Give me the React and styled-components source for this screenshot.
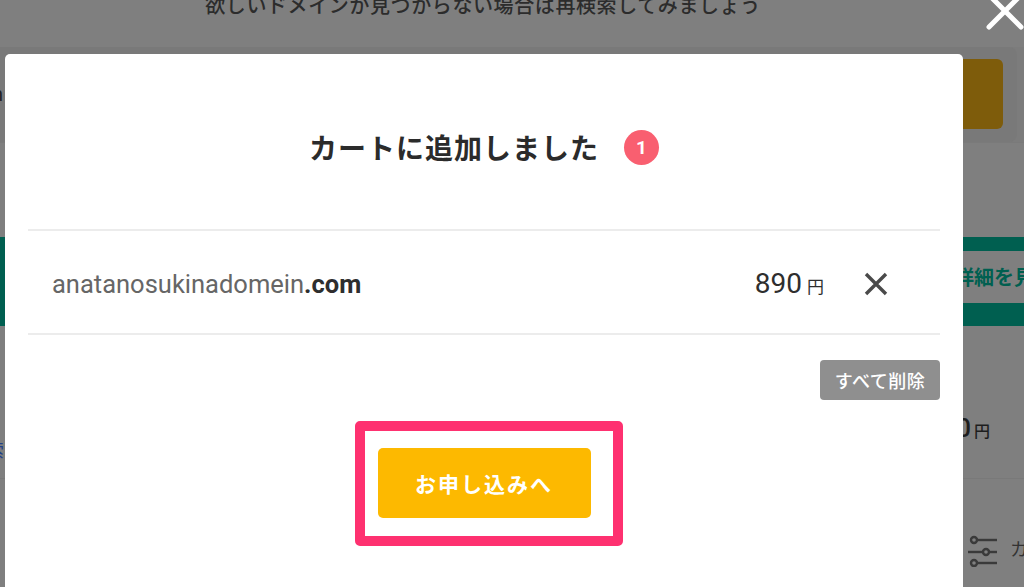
import React from "react";
import styled, { createGlobalStyle } from "styled-components";

const GlobalStyle = createGlobalStyle`
  html, body { margin: 0; padding: 0; }
  body {
    background: #7f7f7f;
    overflow: hidden;
    font-family: Roboto, "Noto Sans CJK JP", "Noto Sans", sans-serif;
  }
`;

const JP = `"Noto Sans CJK JP", Roboto, sans-serif`;

/* ---------- dimmed page behind the dialog ---------- */
const Page = styled.div`
  position: relative;
  width: 1024px;
  height: 587px;
  overflow: hidden;
  background: #7f7f7f;
  display: flex;
  flex-direction: column;
`;

const HintBar = styled.div`
  height: 47px;
  text-align: center;
  font-family: ${JP};
  font-size: 20px;
  font-weight: 500;
  line-height: 20px;
  color: #2c2c2c;
  letter-spacing: 0.6px;
  padding-right: 58px;
  box-sizing: border-box;
  & > span { display: block; margin-top: -5px; }
`;

const SearchStrip = styled.div`
  height: 95px;
  display: flex;
  padding-right: 7px;
  background: #7c7c7c;
`;

const SearchCard = styled.div`
  flex: 1;
  display: flex;
  align-items: center;
  justify-content: space-between;
  background: #797979;
  border-radius: 0 8px 8px 0;
  padding: 12px 14px 13px 0;
`;

const CutText = styled.span`
  font-size: 20px;
  color: #222;
  margin-left: -8px;
`;

const SearchBtn = styled.div`
  width: 60px;
  height: 70px;
  background: #7e5c0b;
  border-radius: 6px;
`;

const ListGap = styled.div`
  height: 94px;
  border-top: 1px solid #7a7a7a;
`;

const TealBand = styled.div`
  height: 89px;
  background: #005f50;
  display: flex;
  justify-content: flex-end;
  align-items: flex-start;
  padding-top: 14px;
  box-sizing: border-box;
`;

const DetailBtn = styled.div`
  height: 52px;
  width: 70px;
  background: #7f7f7f;
  font-family: ${JP};
  font-size: 20px;
  font-weight: 700;
  color: #005f50;
  line-height: 52px;
  white-space: nowrap;
  overflow: hidden;
  padding-left: 2px;
`;

const PriceRow = styled.div`
  height: 152px;
  display: flex;
  justify-content: space-between;
  align-items: flex-start;
  border-bottom: 1px solid #797979;
`;

const LeftCut = styled.div`
  margin-top: 110px;
  margin-left: -14px;
  font-family: ${JP};
  font-size: 18px;
  color: #23418a;
`;

const BgPrice = styled.div`
  margin-top: 87px;
  padding-right: 34px;
  color: #1e1e1e;
  font-size: 26px;
  font-weight: 500;
  & > small { font-family: ${JP}; font-size: 16px; margin-left: 3px; }
`;

const FilterRow = styled.div`
  flex: 1;
  display: flex;
  justify-content: flex-end;
  align-items: flex-start;
  padding-top: 56px;
  gap: 12px;
  font-family: ${JP};
  font-size: 18px;
  color: #333;
  margin-right: -40px;
`;

/* ---------- dialog ---------- */
const Modal = styled.div`
  position: absolute;
  left: 5px;
  top: 54px;
  width: 958px;
  height: 560px;
  background: #fff;
  border-radius: 5px 5px 0 0;
  padding: 0 23px;
  box-sizing: border-box;
  display: flex;
  flex-direction: column;
`;

const CloseBtn = styled.button`
  position: absolute;
  left: 985px;
  top: -9px;
  width: 40px;
  height: 40px;
  padding: 0;
  border: 0;
  background: transparent;
`;

const TitleRow = styled.div`
  height: 177px;
  padding-top: 11px;
  box-sizing: border-box;
  display: flex;
  align-items: center;
  justify-content: center;
  gap: 25px;
  border-bottom: 2px solid #ececec;
`;

const Title = styled.h2`
  margin: 0;
  font-family: ${JP};
  font-size: 28px;
  font-weight: 700;
  letter-spacing: 1px;
  color: #2b2b2b;
`;

const Badge = styled.span`
  width: 35px;
  height: 35px;
  border-radius: 50%;
  background: #f95f70;
  color: #fff;
  font-size: 19px;
  font-weight: 700;
  display: flex;
  align-items: center;
  justify-content: center;
`;

const ItemRow = styled.div`
  height: 104px;
  box-sizing: border-box;
  display: flex;
  align-items: center;
  padding: 3px 52px 0 24px;
  border-bottom: 2px solid #ececec;
`;

const Domain = styled.div`
  flex: 1;
  font-size: 25.5px;
  color: #666;
  & > b { color: #2e2e2e; font-weight: 700; }
`;

const Price = styled.div`
  font-size: 28px;
  font-weight: 400;
  color: #2e2e2e;
  margin-right: 40px;
  & > small { font-family: ${JP}; font-size: 17px; margin-left: 5px; }
`;

const RemoveBtn = styled.button`
  width: 24px;
  height: 24px;
  padding: 0;
  border: 0;
  background: transparent;
  display: flex;
`;

const ClearRow = styled.div`
  display: flex;
  justify-content: flex-end;
  margin-top: 25px;
`;

const ClearBtn = styled.button`
  width: 120px;
  height: 40px;
  border: 0;
  border-radius: 4px;
  background: #8f8f8f;
  color: #fff;
  font-family: ${JP};
  font-size: 18px;
  font-weight: 500;
  letter-spacing: 0.5px;
`;

const ApplyRow = styled.div`
  display: flex;
  justify-content: center;
  margin-top: 48px;
`;

const ApplyWrap = styled.div`
  position: relative;
`;

const ApplyBtn = styled.button`
  width: 213px;
  height: 70px;
  border: 0;
  border-radius: 5px;
  background: #fdb900;
  color: #fff;
  font-family: ${JP};
  font-size: 21px;
  font-weight: 700;
  letter-spacing: 2px;
`;

const Highlight = styled.div`
  position: absolute;
  left: -23px;
  top: -27px;
  width: 268px;
  height: 125px;
  box-sizing: border-box;
  border: 10px solid #fe3170;
  border-radius: 5px;
  pointer-events: none;
`;

const SlidersIcon = () => (
  <svg width="30" height="32" viewBox="0 0 30 32" fill="none" stroke="#3a3a3a" strokeWidth="2.4">
    <line x1="9" y1="5" x2="29" y2="5" />
    <circle cx="6" cy="5" r="3" />
    <line x1="0" y1="17" x2="15" y2="17" />
    <circle cx="18" cy="17" r="3" />
    <line x1="21" y1="17" x2="29" y2="17" />
    <line x1="9" y1="28" x2="29" y2="28" />
    <circle cx="6" cy="28" r="3" />
  </svg>
);

export default function App() {
  return (
    <>
      <GlobalStyle />
      <Page>
        <HintBar>
          <span>欲しいドメインが見つからない場合は再検索してみましょう</span>
        </HintBar>
        <SearchStrip>
          <SearchCard>
            <CutText>n</CutText>
            <SearchBtn />
          </SearchCard>
        </SearchStrip>
        <ListGap />
        <TealBand>
          <DetailBtn>詳細を見る</DetailBtn>
        </TealBand>
        <PriceRow>
          <LeftCut>索</LeftCut>
          <BgPrice>
            890<small>円</small>
          </BgPrice>
        </PriceRow>
        <FilterRow>
          <SlidersIcon />
          <span>カート</span>
        </FilterRow>

        <CloseBtn aria-label="閉じる">
          <svg width="40" height="40" viewBox="0 0 40 40">
            <path d="M4 4 L36 36 M36 4 L4 36" stroke="#fff" strokeWidth="5" strokeLinecap="round" />
          </svg>
        </CloseBtn>

        <Modal>
          <TitleRow>
            <Title>カートに追加しました</Title>
            <Badge>1</Badge>
          </TitleRow>
          <ItemRow>
            <Domain>
              anatanosukinadomein<b>.com</b>
            </Domain>
            <Price>
              890<small>円</small>
            </Price>
            <RemoveBtn aria-label="削除">
              <svg width="24" height="24" viewBox="0 0 24 24">
                <path d="M2 2 L22 22 M22 2 L2 22" stroke="#4a4a4a" strokeWidth="3.4" />
              </svg>
            </RemoveBtn>
          </ItemRow>
          <ClearRow>
            <ClearBtn>すべて削除</ClearBtn>
          </ClearRow>
          <ApplyRow>
            <ApplyWrap>
              <ApplyBtn>お申し込みへ</ApplyBtn>
              <Highlight />
            </ApplyWrap>
          </ApplyRow>
        </Modal>
      </Page>
    </>
  );
}
